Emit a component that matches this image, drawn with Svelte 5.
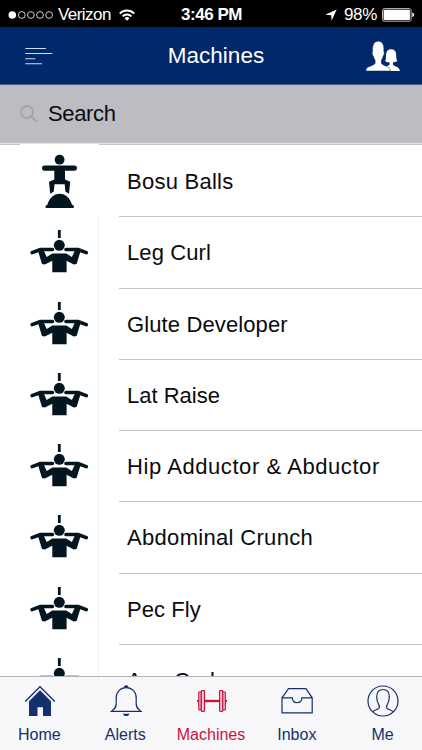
<script lang="ts">
  // ── Machine list ──────────────────────────────────────────────────
  // tracking: letter-spacing in px
  const machines = [
    { name: 'Bosu Balls', icon: 'bosu', tracking: 0.25 },
    { name: 'Leg Curl', icon: 'pullup', tracking: 0.1 },
    { name: 'Glute Developer', icon: 'pullup', tracking: 0.12 },
    { name: 'Lat Raise', icon: 'pullup', tracking: 0 },
    { name: 'Hip Adductor & Abductor', icon: 'pullup', tracking: 0.57 },
    { name: 'Abdominal Crunch', icon: 'pullup', tracking: 0.32 },
    { name: 'Pec Fly', icon: 'pullup', tracking: 0.05 },
    { name: 'Arm Curl', icon: 'pullup', tracking: 0.15 },
  ];

  const tabs = ['Home', 'Alerts', 'Machines', 'Inbox', 'Me'];
  let active = $state('Machines');
</script>

<div class="screen">
  <!-- ── Status bar ──────────────────────────────────────────────── -->
  <div class="status">
    <div class="carrier">
      <svg width="46" height="10" viewBox="0 0 46 10" fill="none" stroke="#fff" aria-hidden="true">
        <circle cx="4.3" cy="5" r="3.8" fill="#fff" stroke="none" />
        <circle cx="13.8" cy="5" r="3.4" stroke-width=".8" />
        <circle cx="22.9" cy="5" r="3.4" stroke-width=".8" />
        <circle cx="32" cy="5" r="3.4" stroke-width=".8" />
        <circle cx="41.1" cy="5" r="3.4" stroke-width=".8" />
      </svg>
      <span class="carrier-name">Verizon</span>
      <svg width="16" height="12" viewBox="0 0 16 12" fill="none" stroke="#fff" stroke-width="2" aria-hidden="true">
        <path d="M.8 4.6a10.2 10.2 0 0 1 14.4 0" />
        <path d="M3.6 7.4a6.2 6.2 0 0 1 8.8 0" />
        <path d="M5.5 9.2a3.6 3.6 0 0 1 5 0L8 11.8z" fill="#fff" stroke="none" />
      </svg>
    </div>
    <span class="time">3:46 PM</span>
    <div class="power">
      <svg width="12" height="12" viewBox="0 0 12 12" fill="#fff" aria-hidden="true">
        <path d="M11.7.5 6.6 11.8 6.2 6.2.3 5.8z" />
      </svg>
      <span class="percent">98%</span>
      <svg width="33" height="14" viewBox="0 0 33 14" aria-hidden="true">
        <rect x=".5" y=".6" width="28.6" height="12.6" rx="1.8" fill="none" stroke="#bbb" />
        <rect x="1.6" y="1.8" width="26.3" height="10.2" rx=".8" fill="#fff" />
        <path d="M30.3 4.6c2.4.7 2.4 3.9 0 4.6z" fill="#fff" />
      </svg>
    </div>
  </div>

  <!-- ── Header ──────────────────────────────────────────────────── -->
  <header class="header">
    <button class="icon-btn" aria-label="Menu">
      <svg width="28" height="18" viewBox="0 0 28 18" stroke="#d3daeb" stroke-width="1.1" aria-hidden="true">
        <path d="M.3 1.5H21M.3 6.5h27M.3 11.7h10M.3 16.7h16.5" />
      </svg>
    </button>
    <h1>Machines</h1>
    <button class="icon-btn" aria-label="Friends">
      <svg width="36" height="32" viewBox="0 0 36 32" fill="#fff" aria-hidden="true">
        <path d="M20.3 27.2c1.800-1.400 3.400-1.800 4-2.300.4-.7.4-1.800 0-2.600-2 0-3.500-.6-4.300-1.300 1.400-1.600.8-4 1.100-7 .4-3 2-4.800 5-4.800s4.800 2 5 4.800c.3 3-.2 5.200 1.300 7-1 .7-2.400 1.200-4.200 1.300-.4.8-.4 1.800 0 2.600.8.9 3 1.400 4.700 2.600 1 .7 1.800 2 2 3.500H25z" />
        <path d="M.8 31c.3-3 1.600-3.700 4.200-4.700 2.100-.9 4.300-1.500 5-2.800.4-1.300.3-2.600-.2-4-.8-1-1.300-2.200-1.500-3.500-1.200-1.200-1.500-3.700-.7-5C7.300 5 9 1.200 13.300 1.200s6 3.800 5.500 9.800c.8 1.300.5 3.800-.6 5-.3 1.300-.8 2.500-1.500 3.500-.5 1.400-.6 2.700-.2 4 .8 1.300 3 1.900 5 2.800 2.300 1 3.600 1.700 4 4.700z" stroke="#00286a" stroke-width=".5" />
      </svg>
    </button>
  </header>

  <!-- ── Search ──────────────────────────────────────────────────── -->
  <label class="search">
    <svg width="18" height="18" viewBox="0 0 18 18" fill="none" stroke="#a09fa6" stroke-width="1.5" aria-hidden="true">
      <circle cx="7" cy="7" r="6" />
      <path d="m11.300 11.300 5.300 5.300" />
    </svg>
    <span>Search</span>
  </label>

  <!-- ── List ────────────────────────────────────────────────────── -->
  <ul class="list">
    {#each machines as machine (machine.name)}
      <li class="row">
        <div class="thumb" class:first={machine.icon === 'bosu'}>
          {#if machine.icon === 'bosu'}
            <svg width="60" height="71" viewBox="0 0 60 71" fill="#03151f" aria-hidden="true">
              <circle cx="29.600" cy="14.700" r="4.900" />
              <rect x="12" y="20.500" width="35" height="5.200" rx="2.600" />
              <path d="M24.300 24h10.700v10.400l5.200 2.300-1.200 12-3.600-2.100-.7-7.300h-10.200l-.7 7.300-3.600 2.100-1.200-12 5.300-2.300z" />
              <path d="M15.900 63c-1-1.500-.2-2.900 1.300-3.100C19.500 53 23.800 48.800 29.700 48.800S39.900 53 42.200 59.900c1.500.2 2.300 1.600 1.300 3.100z" />
            </svg>
          {:else}
            <svg width="60" height="71" viewBox="0 0 60 71" fill="#03151f" aria-hidden="true">
              <rect x="27.900" y="14" width="2.800" height="8" />
              <circle cx="29.300" cy="29.300" r="5.500" />
              <path d="M2.100 36.600 10.500 33.500H22.500M56.300 36.600l-8.400-3.100h-12" fill="none" stroke="#03151f" stroke-width="3.500" stroke-linecap="round" stroke-linejoin="round" />
              <path d="m8 35 5.500-1 3.200 7 5.700-3.600h13.800l5.700 3.600 3.200-7 5.500 1-4 13-2.800.4-7.200-3.600v11.400H22.300V44.800l-7.500 3.600-2.800-.4z" />
            </svg>
          {/if}
        </div>
        <div class="name" style:letter-spacing="{machine.tracking}px">{machine.name}</div>
      </li>
    {/each}
  </ul>

  <!-- ── Tab bar ─────────────────────────────────────────────────── -->
  <nav class="tabs">
    {#each tabs as tab (tab)}
      <button class="tab" class:active={tab === active} onclick={() => (active = tab)}>
        <svg width="34" height="34" viewBox="0 0 34 34" fill="none" stroke="currentColor" stroke-width="1.2" aria-hidden="true">
          {#if tab === 'Home'}
            <path d="M2.200 17.500 17 2.700l14.800 14.800" stroke-width="1.300" />
            <path d="M6 17.200 17 6.200l11 11V32h-8v-8.700h-5.500V32H6z" fill="currentColor" stroke="none" />
          {:else if tab === 'Alerts'}
            <path d="M2.500 27.300c3.400-3 4.700-3.700 4.700-7.300v-6C7.200 7.600 11.500 3.600 17.200 3.600S27.200 7.600 27.200 14v6c0 3.600 1.300 4.300 4.700 7.300z" />
            <path d="M14.800 3.500c.3-3 4.500-3 4.800 0zM14 29.700h6.400c-.4 3.100-6 3.100-6.400 0z" fill="currentColor" stroke="none" />
          {:else if tab === 'Machines'}
            <path d="M9.800 17h14.500" stroke-width="2.400" />
            <rect x="3.800" y="8" width="2.500" height="18" rx=".5" fill="#f7cdd6" />
            <rect x="6.300" y="6.600" width="3.200" height="20.800" rx=".8" fill="#f7cdd6" />
            <rect x="24.600" y="6.600" width="3.200" height="20.800" rx=".8" fill="#f7cdd6" />
            <rect x="27.800" y="8" width="2.500" height="18" rx=".5" fill="#f7cdd6" />
            <path d="M2 17h1.800M30.300 17h1.800" stroke-width="2" />
          {:else if tab === 'Inbox'}
            <path d="M2 13.800 8.500 4.600h17.400l6.300 9.200v15H2zM2 13.800h10.300c.4 6.600 9.200 6.600 9.600 0h10.300" />
          {:else}
            <circle cx="17" cy="17" r="15" />
            <path d="M6.800 27.800c1.200-1.500 5-2.300 6.100-3.500.9-1.100.5-2.700-.3-4-1.200-2-1.900-4.200-1.900-7.500 0-4.500 2.300-7.300 6.300-7.300s6.300 2.800 6.300 7.300c0 3.300-.7 5.500-1.900 7.500-.8 1.300-1.200 2.900-.3 4 1.100 1.200 4.900 2 6.100 3.500" />
          {/if}
        </svg>
        <span>{tab}</span>
      </button>
    {/each}
  </nav>
</div>

<style>
  :global(body) {
    background: #fff;
  }

  .screen {
    width: 422px;
    height: 750px;
    display: flex;
    flex-direction: column;
    overflow: hidden;
    font-family: 'Liberation Sans', Arial, sans-serif;
    color: #0b0b0d;
  }

  button {
    border: 0;
    padding: 0;
    background: none;
    color: inherit;
    font: inherit;
    cursor: pointer;
  }

  svg {
    display: block;
    flex-shrink: 0;
  }

  /* ── Status bar ──────────────────────────────────────────────────── */
  .status {
    display: grid;
    grid-template-columns: 1fr auto 1fr;
    align-items: center;
    height: 27px;
    flex-shrink: 0;
    box-sizing: border-box;
    padding: 2px 7px 0 8px;
    background: #000;
    color: #fff;
    font-size: 17px;
    line-height: 20px;
  }

  .carrier,
  .power {
    display: flex;
    align-items: center;
  }

  .carrier-name {
    margin: 0 8px 0 4px;
    font-size: 17px;
    letter-spacing: -0.55px;
  }

  .time {
    font-weight: 700;
    letter-spacing: -0.45px;
  }

  .power {
    justify-content: flex-end;
  }

  .percent {
    margin: 0 5px 0 7px;
    letter-spacing: -0.3px;
  }

  /* ── Header ──────────────────────────────────────────────────────── */
  .header {
    display: flex;
    align-items: center;
    justify-content: space-between;
    height: 58px;
    flex-shrink: 0;
    box-sizing: border-box;
    padding: 0 21px 0 25px;
    background: #00286a;
    border-bottom: 1px solid #4b5c83;
    color: #fff;
  }

  .icon-btn {
    width: 36px;
  }

  h1 {
    margin: 0 0 0 6px;
    font-size: 22.5px;
    font-weight: 400;
    line-height: 26px;
  }

  /* ── Search ──────────────────────────────────────────────────────── */
  .search {
    display: flex;
    align-items: center;
    gap: 10px;
    height: 59px;
    flex-shrink: 0;
    box-sizing: border-box;
    padding-left: 20px;
    background: #bdbcc2;
    border-bottom: 1px solid #e6e6ea;
    font-size: 22px;
    letter-spacing: -0.35px;
  }

  /* ── List ────────────────────────────────────────────────────────── */
  .list {
    flex: 1;
    min-height: 0;
    margin: 0;
    padding: 1px 0 0;
    list-style: none;
    overflow: clip;
    overflow-clip-margin: border-box;
    border-top: 1px solid #c3c3c9;
  }

  .row {
    display: flex;
    height: 71.25px;
  }

  .thumb {
    width: 99px;
    margin-right: 20px;
    padding-left: 30px;
    box-sizing: border-box;
    border-right: 1px solid #f1f1f3;
  }

  .thumb svg {
    margin-top: -1px;
  }

  /* first thumbnail covers the line under the search field */
  .thumb.first {
    position: relative;
    border-right-color: transparent;
  }

  .thumb.first::before {
    content: '';
    position: absolute;
    top: -2px;
    left: 20px;
    width: 79px;
    height: 3px;
    background: #fff;
  }

  .name {
    flex: 1;
    display: flex;
    align-items: center;
    padding: 2px 0 0 8px;
    box-sizing: border-box;
    border-bottom: 1px solid #c3c3c8;
    font-size: 22px;
    white-space: nowrap;
  }

  /* ── Tab bar ─────────────────────────────────────────────────────── */
  .tabs {
    display: grid;
    grid-template-columns: repeat(5, 85.8px);
    justify-content: center;
    height: 74px;
    flex-shrink: 0;
    box-sizing: border-box;
    border-top: 1px solid #b4b4b8;
    background: #f7f7fa;
    color: #12306d;
  }

  .tab {
    display: flex;
    flex-direction: column;
    align-items: center;
    padding-top: 7px;
    font-size: 16px;
    line-height: 18px;
  }

  .tab span {
    margin-top: 8px;
  }

  .tab svg {
    position: relative;
    left: 0.6px;
  }

  .tab.active {
    color: #c41541;
  }
</style>
